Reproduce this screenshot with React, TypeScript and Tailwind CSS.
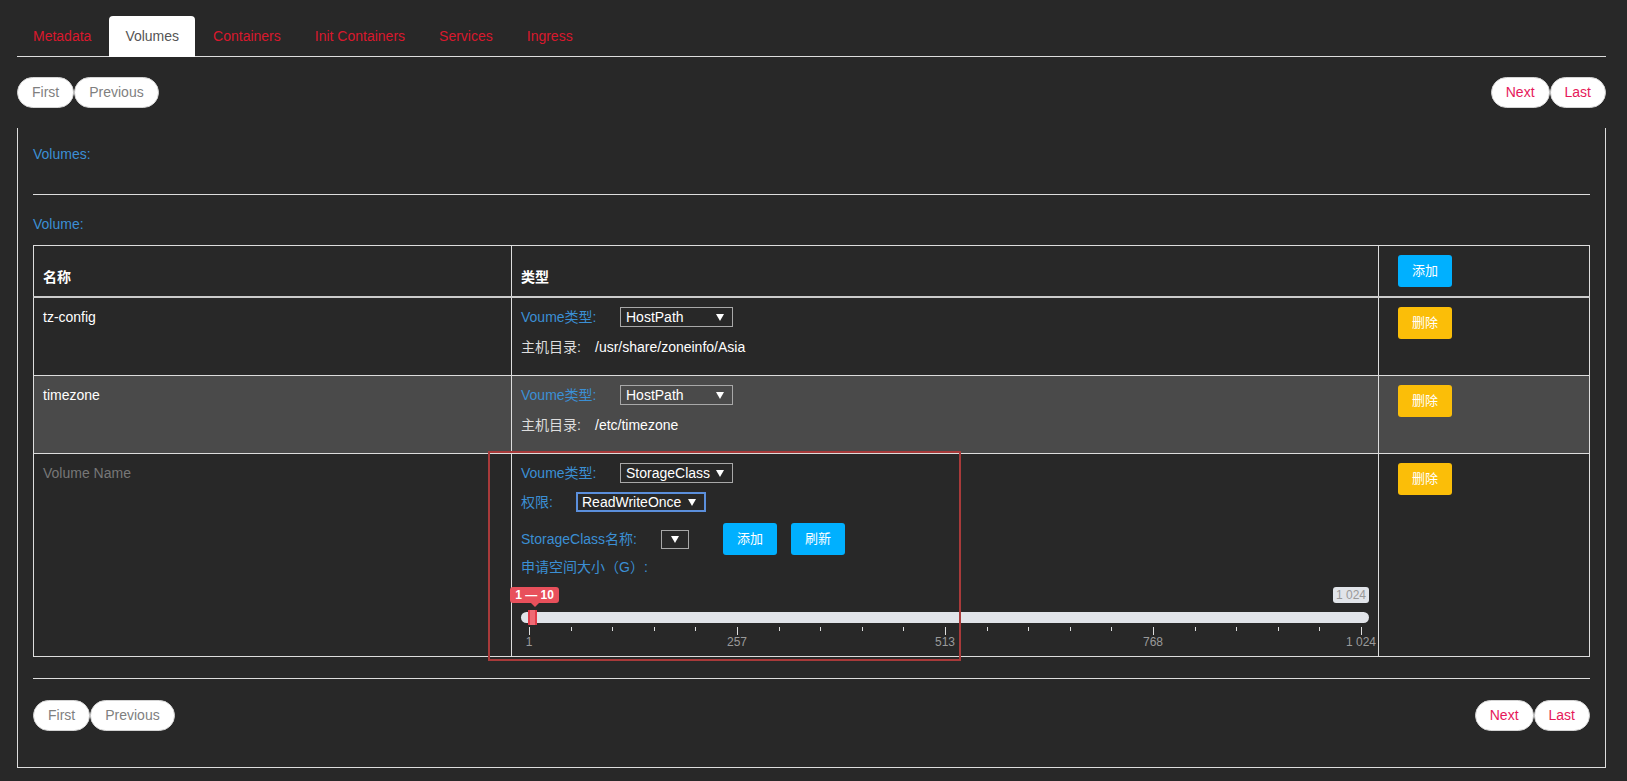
import React from 'react';
import clsx from 'clsx';

const tabs = ['Metadata', 'Volumes', 'Containers', 'Init Containers', 'Services', 'Ingress'];

function PagerButton({ label, accent }: { label: string; accent?: boolean }) {
  return (
    <button
      className={clsx(
        'h-[31px] rounded-full border border-[#d4d4d4] bg-white px-[14px] text-[14px] leading-[29px]',
        accent ? 'text-[#e6185a]' : 'text-[#7f7f7f]'
      )}
    >
      {label}
    </button>
  );
}

function Pager() {
  return (
    <div className="flex items-center justify-between">
      <div className="flex">
        <PagerButton label="First" />
        <PagerButton label="Previous" />
      </div>
      <div className="flex">
        <PagerButton label="Next" accent />
        <PagerButton label="Last" accent />
      </div>
    </div>
  );
}

function Caret() {
  return (
    <svg width="8" height="7" viewBox="0 0 8 7" className="shrink-0">
      <path d="M0 0 H8 L4 7 Z" fill="#ffffff" />
    </svg>
  );
}

function Select({ value, width, focused }: { value?: string; width: string; focused?: boolean }) {
  return (
    <div
      className={clsx(
        'flex h-5 items-center justify-between pr-[8px] text-[14px] text-white',
        width,
        focused ? 'border-2 border-[#5b8fdc] pl-[4px]' : 'border border-[#a8a8a8] pl-[5px]'
      )}
    >
      <span className="whitespace-nowrap">{value}</span>
      <Caret />
    </div>
  );
}

function ActionButton({ label, tone }: { label: string; tone: 'blue' | 'yellow' }) {
  return (
    <button
      className={clsx(
        'h-8 w-[54px] rounded-[3px] text-[13px] font-normal text-white',
        tone === 'blue' ? 'bg-[#00b0ff]' : 'bg-[#fbbe08]'
      )}
    >
      {label}
    </button>
  );
}

function HostPathCell({ path }: { path: string }) {
  return (
    <>
      <div className="mb-[10px] flex h-5 items-center">
        <span className="w-[99px] text-[#3b8fd4]">Voume类型:</span>
        <Select value="HostPath" width="w-[113px]" />
      </div>
      <div className="mb-[9px] flex h-5 items-center">
        <span className="w-[74px] text-[#dddddd]">主机目录:</span>
        <span className="text-white">{path}</span>
      </div>
    </>
  );
}

function RangeSlider() {
  const ticks = Array.from({ length: 21 }, (_, i) => i);
  const labels: Record<number, string> = { 0: '1', 5: '257', 10: '513', 15: '768', 20: '1 024' };
  return (
    <div className="relative h-[70px] w-full">
      {/* from label */}
      <div className="absolute left-[-11px] top-[10px] flex h-4 w-[49px] items-center justify-center rounded-[3px] bg-[#e8505b] text-[12px] font-bold leading-none text-white">
        1 — 10
        <span className="absolute bottom-[-4px] left-[21px] h-0 w-0 border-x-[4px] border-t-[4px] border-x-transparent border-t-[#e8505b]" />
      </div>
      {/* max label */}
      <div className="absolute right-0 top-[10px] flex h-4 w-[36px] items-center justify-center rounded-[3px] bg-[#e1e4e9] text-[12px] leading-none text-[#999]">
        1 024
      </div>
      {/* track */}
      <div className="absolute left-0 right-0 top-[35px] h-[11px] rounded-full bg-[#e1e4e9]" />
      {/* selected range */}
      <div className="absolute left-[7px] top-[33px] flex h-[15px] w-[9px] justify-between bg-[#ef6a74]">
        <span className="h-full w-[2px] bg-[#e23c49]" />
        <span className="h-full w-[2px] bg-[#e23c49]" />
      </div>
      {/* ticks */}
      {ticks.map((i) => {
        const major = i % 5 === 0;
        return (
          <div key={i} className="absolute top-[50px]" style={{ left: 8 + i * 41.6 }}>
            <div className={clsx('w-px bg-[#dddddd]', major ? 'h-2' : 'h-[4px]')} />
            {major && (
              <div className="absolute left-0 top-[8px] -translate-x-1/2 whitespace-nowrap text-[12px] leading-[14px] text-[#9a9a9a]">
                {labels[i]}
              </div>
            )}
          </div>
        );
      })}
    </div>
  );
}

export default function App() {
  return (
    <div className="relative min-h-screen w-full bg-[#282828] pl-[17px] pr-[21px] pt-[16px] font-['Liberation_Sans','Noto_Sans_CJK_SC',sans-serif] text-[14px] leading-5 text-white">
      {/* Tabs */}
      <div className="flex border-b border-[#dddddd]">
        {tabs.map((t) => (
          <div
            key={t}
            className={clsx(
              'mr-0.5 px-4 py-2.5',
              t === 'Volumes' ? '-mb-px rounded-t-[4px] bg-white text-[#555]' : 'text-[#d9182d]'
            )}
          >
            {t}
          </div>
        ))}
      </div>

      {/* Top pager */}
      <div className="mt-5">
        <Pager />
      </div>

      {/* Panel */}
      <div className="mt-5 border-x border-b border-[#dddddd] px-[15px] pb-9 pt-4">
        <div className="h-5 text-[#3b8fd4]">Volumes:</div>
        <div className="mt-[30px] h-px bg-[#dddddd]" />
        <div className="mt-[19px] h-5 text-[#3b8fd4]">Volume:</div>

        <table className="mt-[11px] w-full table-fixed border-collapse">
          <colgroup>
            <col className="w-[478px]" />
            <col className="w-[867px]" />
            <col />
          </colgroup>
          <thead>
            <tr>
              <th className="border border-b-2 border-[#dddddd] border-b-[#cccccc] p-[9px] text-left align-bottom font-bold">名称</th>
              <th className="border border-b-2 border-[#dddddd] border-b-[#cccccc] p-[9px] text-left align-bottom font-bold">类型</th>
              <th className="border border-b-2 border-[#dddddd] border-b-[#cccccc] p-[9px] pl-[19px] text-left align-top">
                <ActionButton label="添加" tone="blue" />
              </th>
            </tr>
          </thead>
          <tbody>
            <tr>
              <td className="border border-[#dddddd] p-[9px] align-top">tz-config</td>
              <td className="border border-[#dddddd] p-[9px] align-top">
                <HostPathCell path="/usr/share/zoneinfo/Asia" />
              </td>
              <td className="border border-[#dddddd] p-[9px] pl-[19px] align-top">
                <ActionButton label="删除" tone="yellow" />
              </td>
            </tr>
            <tr className="bg-[#4a4a4a]">
              <td className="border border-[#dddddd] p-[9px] align-top">timezone</td>
              <td className="border border-[#dddddd] p-[9px] align-top">
                <HostPathCell path="/etc/timezone" />
              </td>
              <td className="border border-[#dddddd] p-[9px] pl-[19px] align-top">
                <ActionButton label="删除" tone="yellow" />
              </td>
            </tr>
            <tr>
              <td className="border border-[#dddddd] p-[9px] align-top text-[#777]">Volume Name</td>
              <td className="border border-[#dddddd] p-[9px] align-top">
                <div className="mb-[9px] flex h-5 items-center">
                  <span className="w-[99px] text-[#3b8fd4]">Voume类型:</span>
                  <Select value="StorageClass" width="w-[113px]" />
                </div>
                <div className="mb-[9px] flex h-5 items-center">
                  <span className="w-[55px] text-[#3b8fd4]">权限:</span>
                  <Select value="ReadWriteOnce" width="w-[130px]" focused />
                </div>
                <div className="flex h-9 items-center">
                  <span className="w-[140px] text-[#3b8fd4]">StorageClass名称:</span>
                  <div className="flex h-[19px] w-[28px] items-center justify-center border border-[#a8a8a8]">
                    <Caret />
                  </div>
                  <div className="ml-[34px] flex gap-[14px]">
                    <ActionButton label="添加" tone="blue" />
                    <ActionButton label="刷新" tone="blue" />
                  </div>
                </div>
                <div className="h-5 text-[#3b8fd4]">申请空间大小（G）:</div>
                <RangeSlider />
              </td>
              <td className="border border-[#dddddd] p-[9px] pl-[19px] align-top">
                <ActionButton label="删除" tone="yellow" />
              </td>
            </tr>
          </tbody>
        </table>

        <div className="mt-[21px] h-px bg-[#dddddd]" />
        <div className="mt-[21px]">
          <Pager />
        </div>
      </div>

      {/* highlight annotation */}
      <div className="pointer-events-none absolute left-[488px] top-[451px] h-[210px] w-[473px] border-2 border-[#a83a3a]" />
    </div>
  );
}
